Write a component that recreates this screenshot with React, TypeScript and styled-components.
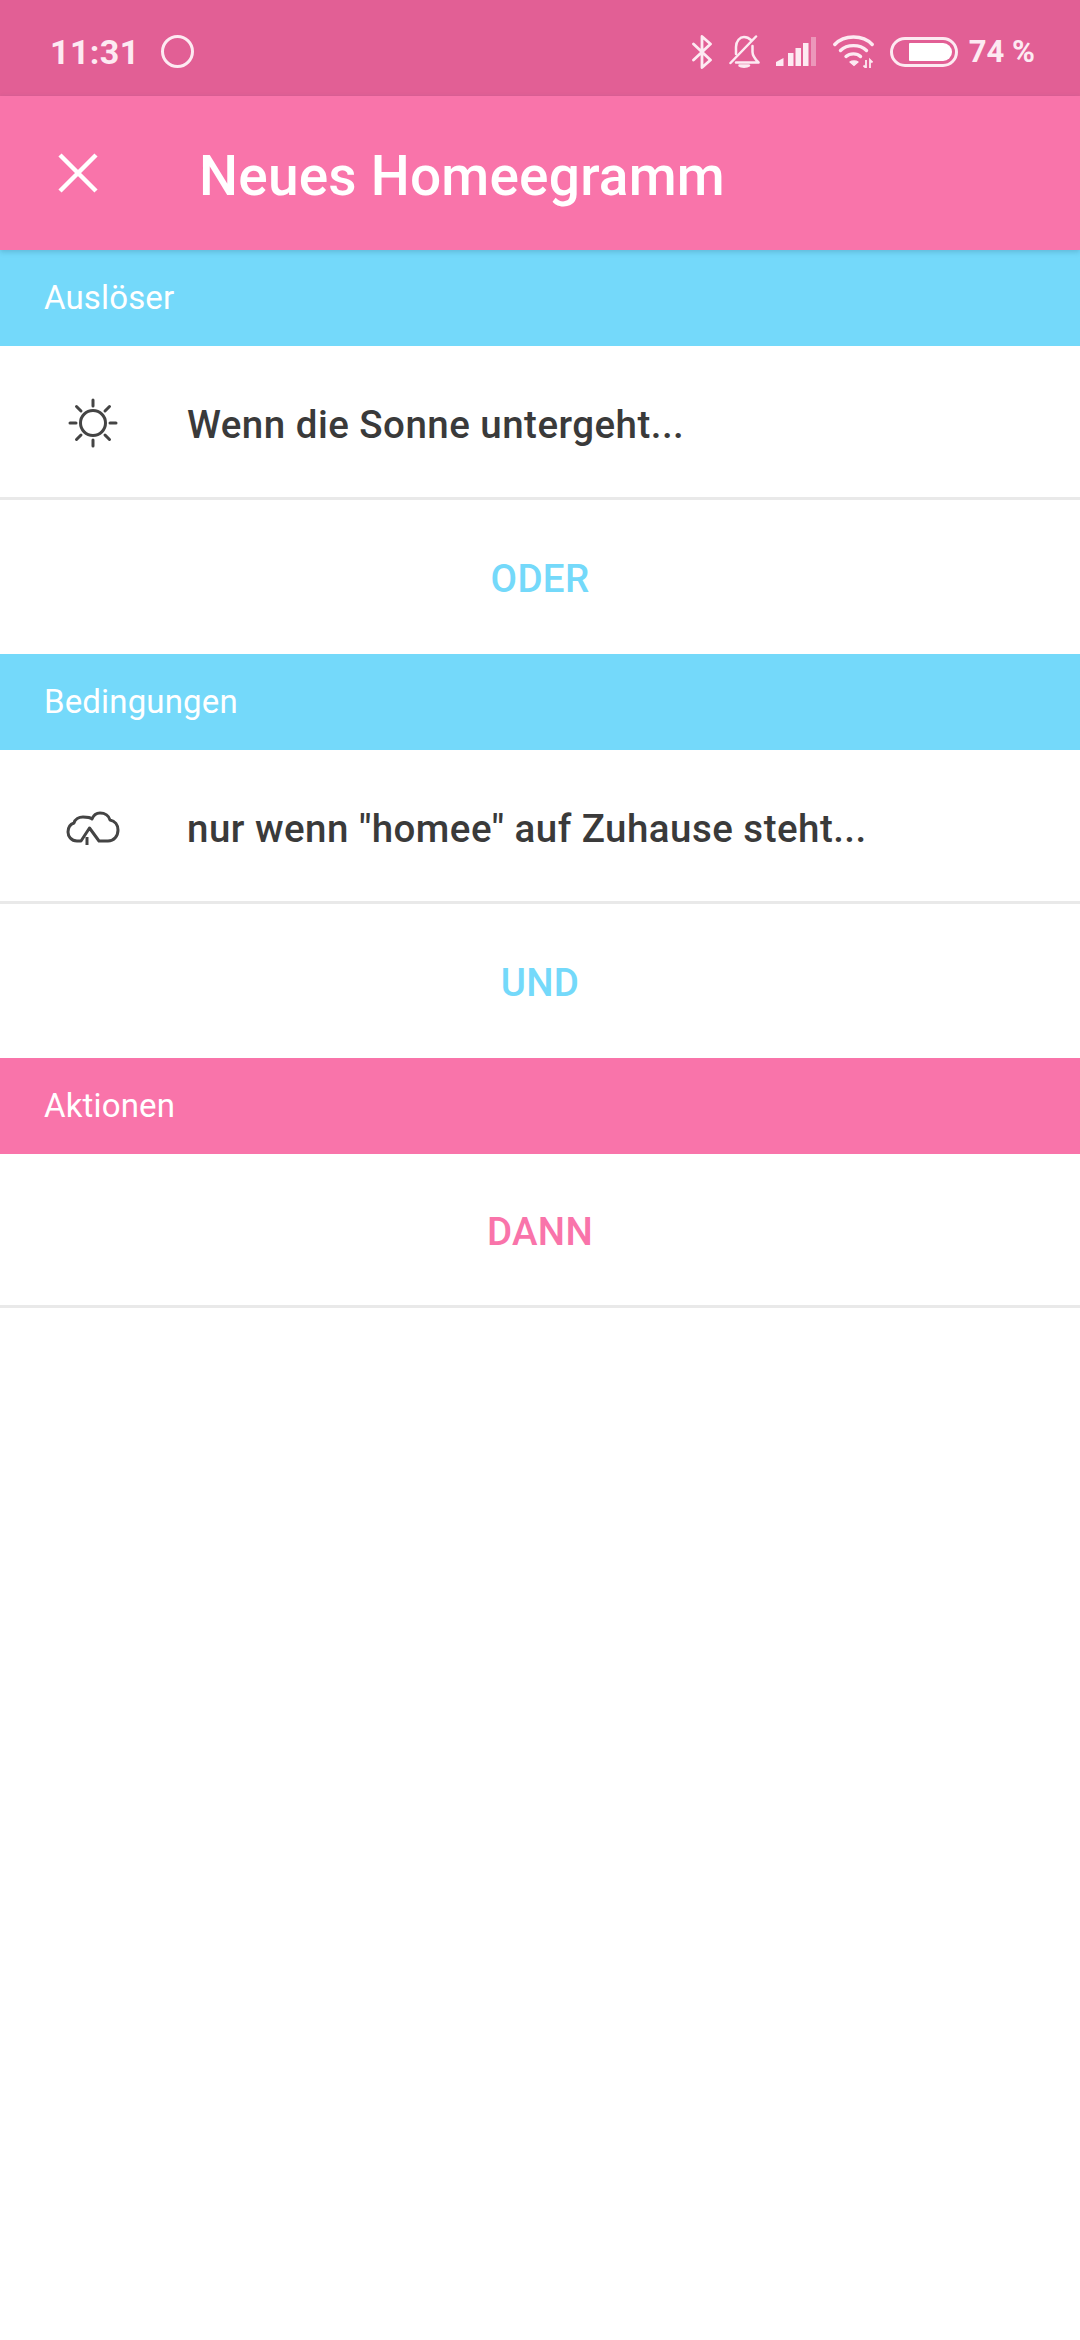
import {FC} from "react";
import styled, {createGlobalStyle} from "styled-components";

const PINK = '#f974aa';
const BLUE = '#74d9fa';
const STATUS = '#fdeaf2';

const GlobalStyle = createGlobalStyle`
  html, body {
    margin: 0;
    padding: 0;
    background: white;
    font-family: Roboto, "Noto Sans", sans-serif;
  }
`;

const Page = styled.div`
  width: 1080px;
  height: 2340px;
  background: white;
  overflow: hidden;
`;

const StatusBar = styled.div`
  height: 96px;
  box-sizing: border-box;
  padding: 7px 45px 0 50px;
  display: flex;
  align-items: center;
  justify-content: space-between;
  background: #e25f95;
  color: ${STATUS};
`;

const StatusGroup = styled.div`
  display: flex;
  align-items: center;
`;

const Clock = styled.span`
  font-size: 34px;
  font-weight: 700;
  letter-spacing: 0.4px;
  margin-right: 21px;
`;

const Percent = styled.span`
  font-size: 31px;
  font-weight: 700;
  margin-left: 11px;
`;

const Header = styled.header`
  position: relative;
  z-index: 1;
  height: 154px;
  display: flex;
  align-items: center;
  background: ${PINK};
  box-shadow: 0 2px 5px rgba(40, 90, 120, 0.25);
`;

const CloseButton = styled.div`
  width: 199px;
  padding-left: 58px;
  box-sizing: border-box;
  display: flex;
  align-items: center;
`;

const Title = styled.h1`
  margin: 0;
  padding-top: 6px;
  font-size: 55px;
  font-weight: 500;
  letter-spacing: 0.2px;
  color: white;
`;

const SectionBar = styled.div<{color: string}>`
  height: 96px;
  box-sizing: border-box;
  padding: 0 0 2px 44px;
  display: flex;
  align-items: center;
  background: ${({color}) => color};
  color: white;
  font-size: 33px;
  letter-spacing: 0.15px;
`;

const Row = styled.div`
  height: 154px;
  box-sizing: border-box;
  display: flex;
  align-items: center;
  border-bottom: 3px solid #e9e9e9;
`;

const RowIcon = styled.div`
  width: 187px;
  padding: 2px 0 0 63px;
  box-sizing: border-box;
  display: flex;
  align-items: center;
`;

const RowText = styled.span`
  padding-top: 5px;
  font-size: 38.5px;
  font-weight: 500;
  letter-spacing: 0.47px;
  color: #3a3a3a;
`;

const LinkRow = styled.div<{color: string; divider?: boolean}>`
  height: 154px;
  box-sizing: border-box;
  padding-top: 3px;
  display: flex;
  align-items: center;
  justify-content: center;
  font-size: 38.5px;
  font-weight: 500;
  letter-spacing: 0.3px;
  color: ${({color}) => color};
  ${({divider}) => divider && 'border-bottom: 3px solid #e9e9e9;'}
`;

const StatusIcon = styled.svg<{gap?: number}>`
  display: block;
  margin-right: ${({gap}) => gap ?? 0}px;
`;

const CloseIcon: FC = () => (
  <svg width="40" height="40" viewBox="0 0 40 40">
    <path d="M2 2 L38 38 M38 2 L2 38" stroke="white" strokeWidth="4.5" fill="none"/>
  </svg>
);

const SunIcon: FC = () => (
  <svg width="60" height="60" viewBox="0 0 60 60" fill="none" stroke="#444444" strokeWidth="3" strokeLinecap="round">
    <circle cx="30" cy="30" r="12.500"/>
    <path d="M30 7V13M30 47V53M7 30H13M47 30H53M13.500 13.500L18 18M42 42L46.500 46.500M46.500 13.500L42 18M18 42L13.500 46.500"/>
  </svg>
);

const CloudIcon: FC = () => (
  <svg width="60" height="60" viewBox="0 0 60 60" fill="none" stroke="#444444" strokeWidth="3">
    <path d="M14 44C8 44 5 39 5 35C5 30 8 27 11 26C12 22 16 20 20 20C24 20 27 20 29 22C31 17 34 16 37 16C42 16 46 19 47 23C52 24 55 28 55 33C55 39 51 44 45 44H36L26.500 31L18 44Z" strokeLinejoin="round"/>
    <path d="M24 40V48"/>
  </svg>
);

const StatusIcons: FC = () => (
  <>
    <StatusIcon gap={17} width="20" height="34" viewBox="0 0 20 34" fill="none" stroke={STATUS} strokeWidth="2.800" strokeLinecap="round" strokeLinejoin="round">
      <path d="M1.500 9L18.500 25L10 32.500V1.500L18.500 9L1.500 25"/>
    </StatusIcon>
    <StatusIcon gap={16} width="31" height="33" viewBox="0 0 31 33" fill="none" stroke={STATUS} strokeWidth="2.500" strokeLinecap="round" strokeLinejoin="round">
      <path d="M7 19V12C7 6 11 2 15 2C18 2 20 3 22 5M23.500 11V17C23.500 21 26 24 29.500 27.500H7"/>
      <path d="M27 1.500L1.500 28"/>
      <path d="M10.500 30.500C12 32 18 32 20 30.500Z" fill={STATUS}/>
    </StatusIcon>
    <StatusIcon gap={17} width="40" height="29" viewBox="0 0 40 29" fill={STATUS}>
      <path d="M0 29V25L7.500 21V29Z"/>
      <rect x="12" y="16" width="5.500" height="13"/>
      <rect x="19.500" y="11" width="5.500" height="18"/>
      <rect x="27" y="6" width="5.500" height="23"/>
      <rect x="35" y="0" width="5" height="29" opacity="0.4"/>
    </StatusIcon>
    <StatusIcon gap={16} width="41" height="33" viewBox="0 0 41 33" fill="none" stroke={STATUS} strokeWidth="3.400" strokeLinecap="round">
      <path d="M1.800 9.500C11 -0.500 30 -0.500 39.200 9.500"/>
      <path d="M7.500 15.500C14 9 27 9 33.500 15.500"/>
      <path d="M13 21.500C17 18 24 18 27.500 21.500"/>
      <path d="M17 27L21 30.500L25 27C23 25.500 19 25.500 17 27Z" fill={STATUS} strokeWidth="1.200"/>
      <path d="M33 25V33L30.500 30.500M37 33V25L39.500 27.500" strokeWidth="1.800" strokeLinecap="butt"/>
    </StatusIcon>
    <svg width="68" height="30" viewBox="0 0 68 30">
      <rect x="1.500" y="1.500" width="65" height="27" rx="13.500" fill="none" stroke={STATUS} strokeWidth="3"/>
      <path d="M20 6H53A9 9 0 0 1 53 24H20Q19 24 19 23V7Q19 6 20 6Z" fill="white"/>
    </svg>
    <Percent>74 %</Percent>
  </>
);

const App: FC = () => {
  return (
    <Page>
      <GlobalStyle/>
      <StatusBar>
        <StatusGroup>
          <Clock>11:31</Clock>
          <svg width="33" height="33" viewBox="0 0 33 33">
            <circle cx="16.500" cy="16.500" r="15" fill="none" stroke={STATUS} strokeWidth="3"/>
          </svg>
        </StatusGroup>
        <StatusGroup>
          <StatusIcons/>
        </StatusGroup>
      </StatusBar>
      <Header>
        <CloseButton><CloseIcon/></CloseButton>
        <Title>Neues Homeegramm</Title>
      </Header>
      <SectionBar color={BLUE}>Auslöser</SectionBar>
      <Row>
        <RowIcon><SunIcon/></RowIcon>
        <RowText>Wenn die Sonne untergeht...</RowText>
      </Row>
      <LinkRow color={BLUE}>ODER</LinkRow>
      <SectionBar color={BLUE}>Bedingungen</SectionBar>
      <Row>
        <RowIcon><CloudIcon/></RowIcon>
        <RowText>nur wenn "homee" auf Zuhause steht...</RowText>
      </Row>
      <LinkRow color={BLUE}>UND</LinkRow>
      <SectionBar color={PINK}>Aktionen</SectionBar>
      <LinkRow color={PINK} divider>DANN</LinkRow>
    </Page>
  );
};

export default App;
